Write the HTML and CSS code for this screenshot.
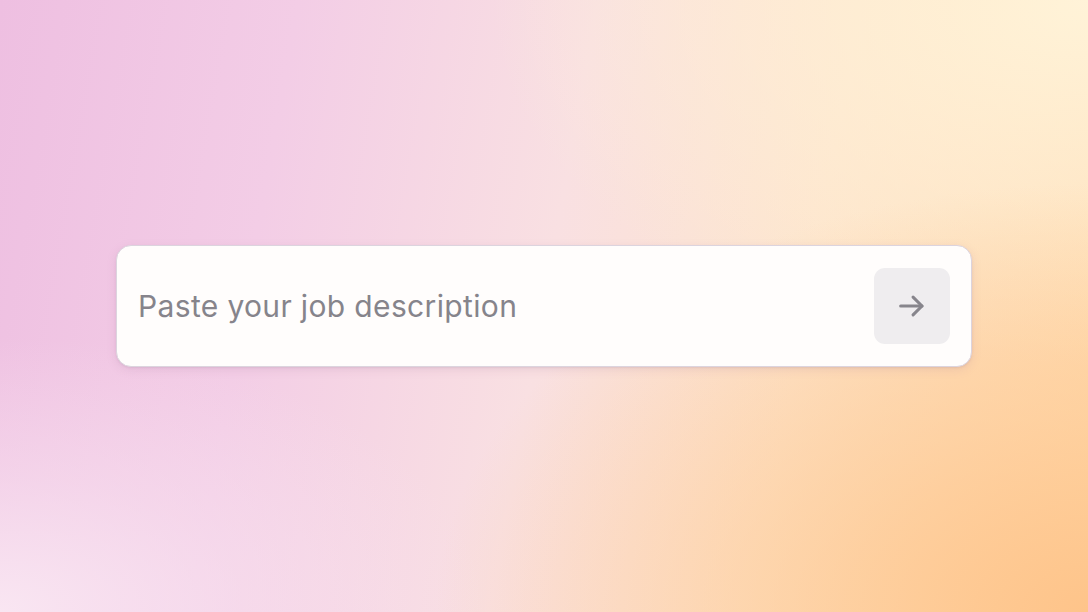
FILE: index.html
```html
<!DOCTYPE html>
<html lang="en">
<head>
<meta charset="utf-8">
<title>Job description</title>
<link rel="stylesheet" href="styles.css">
</head>
<body>
<main class="page">
  <form class="prompt">
    <input class="prompt-input" type="text" placeholder="Paste your job description">
    <button class="prompt-send" type="button" aria-label="Submit">
      <svg width="32" height="32" viewBox="0 0 24 24" fill="none" stroke="currentColor" stroke-width="2.3" stroke-linecap="round" stroke-linejoin="round">
        <path d="M3.5 12h16"/>
        <path d="M12.8 5.3l6.7 6.7-6.7 6.7"/>
      </svg>
    </button>
  </form>
</main>
</body>
</html>
```
FILE: styles.css
```css
html, body {
  margin: 0;
  height: 100%;
}
body {
  font-family: Inter, "Noto Sans", "Liberation Sans", sans-serif;
  background:
    radial-gradient(ellipse 60% 70% at 100% 100%, rgba(254,196,138,1) 0%, rgba(254,200,145,0.6) 45%, rgba(254,210,160,0) 100%),
    radial-gradient(ellipse 55% 60% at 100% 0%, rgba(255,243,216,1) 0%, rgba(255,240,214,0.6) 50%, rgba(255,240,214,0) 100%),
    radial-gradient(ellipse 45% 45% at 0% 100%, rgba(249,230,242,1) 0%, rgba(248,226,240,0.5) 50%, rgba(248,226,240,0) 100%),
    linear-gradient(100deg, #eebfe1 0%, #f3cde6 25%, #f9e0e2 50%, #fde4cc 72%, #ffdcb0 100%);
}
.page {
  height: 100%;
  display: flex;
  align-items: center;
  justify-content: center;
}
.prompt {
  width: 856px;
  box-sizing: border-box;
  display: flex;
  align-items: center;
  gap: 16px;
  padding: 22px 21px;
  background: #fffdfc;
  border: 1px solid #dcd4de;
  border-radius: 15px;
  box-shadow: 0 3px 10px rgba(170, 130, 160, 0.18), 0 1px 2px rgba(150, 120, 150, 0.15);
}
.prompt-input {
  flex: 1;
  min-width: 0;
  border: 0;
  outline: 0;
  background: transparent;
  padding: 0;
  font-family: inherit;
  font-size: 30px;
  letter-spacing: 0.35px;
  color: #333;
}
.prompt-input::placeholder {
  color: #86848b;
  opacity: 1;
}
.prompt-send {
  flex: none;
  width: 76px;
  height: 76px;
  border: 0;
  border-radius: 11px;
  background: #efedef;
  color: #87858c;
  display: flex;
  align-items: center;
  justify-content: center;
  padding: 0;
  cursor: pointer;
}
```
